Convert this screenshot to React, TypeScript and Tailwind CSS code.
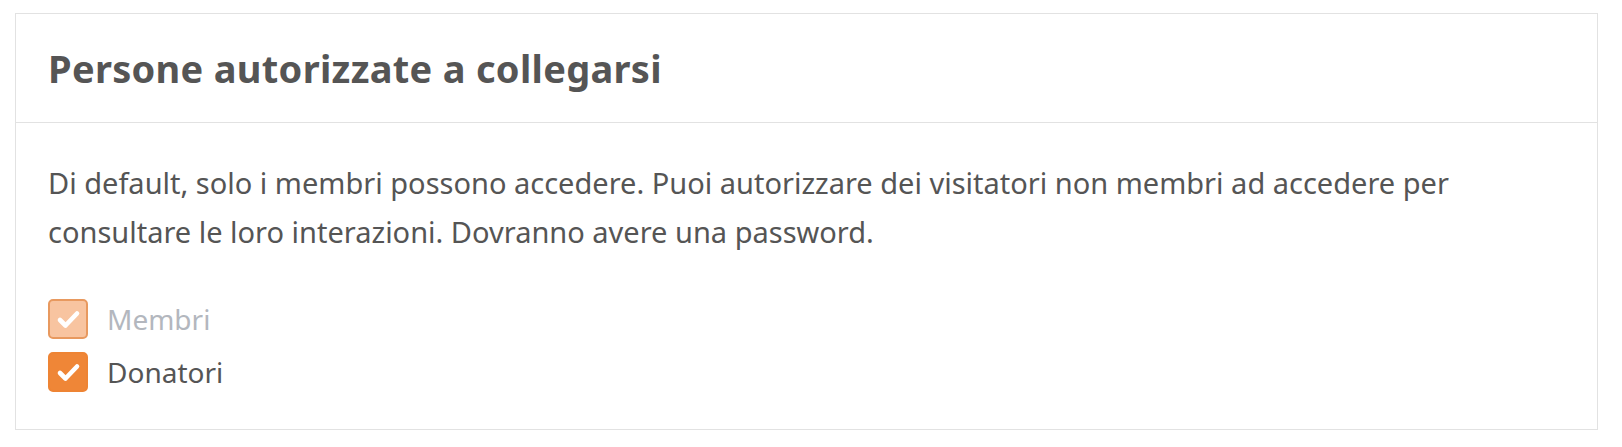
import React from 'react';

type Option = {
  label: string;
  checked: boolean;
  disabled?: boolean;
};

const options: Option[] = [
  { label: 'Membri', checked: true, disabled: true },
  { label: 'Donatori', checked: true },
];

const CheckMark = () => (
  <svg width="36" height="36" viewBox="0 0 36 36" fill="none">
    <path
      d="M10 19 L15.5 24.5 L27 12.5"
      stroke="white"
      strokeWidth="4.6"
      strokeLinecap="round"
      strokeLinejoin="round"
    />
  </svg>
);

const CheckboxRow = ({ option }: { option: Option }) => (
  <label className="flex items-center gap-[19px] h-[40px]">
    <span
      className={
        option.disabled
          ? 'flex items-center justify-center w-[40px] h-[40px] rounded-[5px] border-2 border-[#e8995f] bg-[#f8c4a0]'
          : 'flex items-center justify-center w-[40px] h-[40px] rounded-[5px] border-2 border-[#ee8434] bg-[#ef8637]'
      }
    >
      {option.checked && <CheckMark />}
    </span>
    <span
      className={
        option.disabled
          ? 'text-[28px] text-[#b3b7be]'
          : 'text-[28px] text-[#555555]'
      }
    >
      {option.label}
    </span>
  </label>
);

export default function App() {
  return (
    <div className="min-h-[447px] bg-white pt-[13px] pl-[15px] font-['Noto_Sans','Open_Sans',sans-serif]">
      <div className="w-[1583px] h-[417px] border border-[#e2e2e2] bg-white">
        <div className="h-[109px] flex items-center px-[32px] border-b border-[#e2e2e2]">
          <h1 className="text-[38px] font-bold text-[#555555] tracking-[0.3px]">
            Persone autorizzate a collegarsi
          </h1>
        </div>
        <div className="px-[32px] pt-[35px]">
          <p className="text-[29px] leading-[49px] text-[#555555] max-w-[1440px]">
            Di default, solo i membri possono accedere. Puoi autorizzare dei visitatori non membri ad
            accedere per consultare le loro interazioni. Dovranno avere una password.
          </p>
          <div className="mt-[43px] flex flex-col gap-[13px]">
            {options.map((o) => (
              <CheckboxRow key={o.label} option={o} />
            ))}
          </div>
        </div>
      </div>
    </div>
  );
}
